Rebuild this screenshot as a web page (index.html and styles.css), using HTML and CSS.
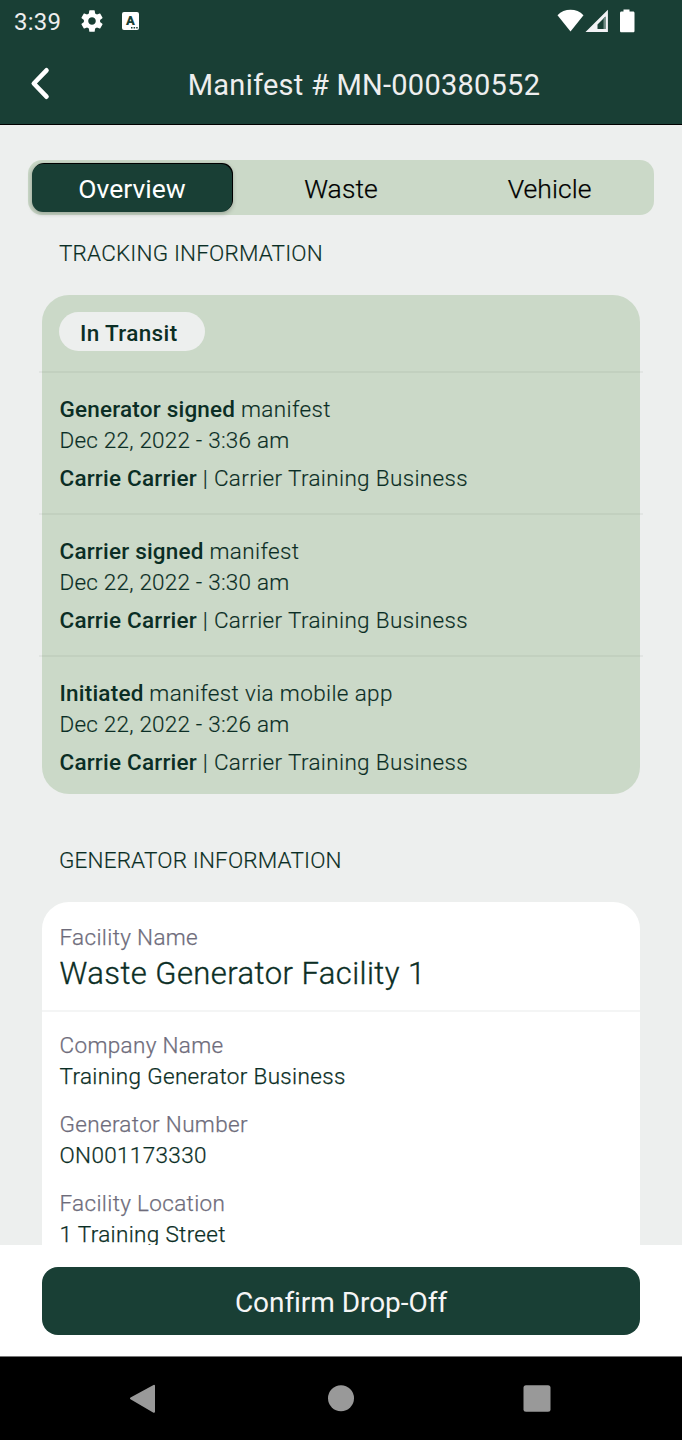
FILE: index.html
```html
<!DOCTYPE html>
<html lang="en">
<head>
<meta charset="utf-8">
<title>Manifest</title>
<link rel="stylesheet" href="styles.css">
</head>
<body>
<div class="screen">
  <div class="status">
    <span class="clock">3:39</span>
    <svg class="ic-gear" width="26" height="26" viewBox="0 0 24 24"><path fill="#fff" d="M19.43 12.98c.04-.32.07-.64.07-.98s-.03-.66-.07-.98l2.11-1.65c.19-.15.24-.42.12-.64l-2-3.46c-.12-.22-.39-.3-.61-.22l-2.49 1c-.52-.4-1.08-.73-1.69-.98l-.38-2.65C14.46 2.18 14.25 2 14 2h-4c-.25 0-.46.18-.49.42l-.38 2.65c-.61.25-1.17.59-1.69.98l-2.49-1c-.23-.09-.49 0-.61.22l-2 3.46c-.13.22-.07.49.12.64l2.11 1.65c-.04.32-.07.65-.07.98s.03.66.07.98l-2.11 1.65c-.19.15-.24.42-.12.64l2 3.46c.12.22.39.3.61.22l2.49-1c.52.4 1.08.73 1.69.98l.38 2.65c.03.24.24.42.49.42h4c.25 0 .46-.18.49-.42l.38-2.65c.61-.25 1.17-.59 1.69-.98l2.49 1c.23.09.49 0 .61-.22l2-3.46c.12-.22.07-.49-.12-.64l-2.110-1.650zM12 15.500c-1.930 0-3.500-1.570-3.500-3.500s1.570-3.500 3.500-3.500 3.500 1.570 3.500 3.500-1.570 3.500-3.500 3.500z"/></svg>
    <span class="ic-a">A<svg width="7" height="2" viewBox="0 0 7 2"><path fill="#193f35" d="M0 0h1.500v1.500H0zM2.600 0h1.500v1.500H2.600zM5.200 0h1.500v1.500H5.200z"/></svg></span>
    <svg class="ic-right" width="82" height="26" viewBox="0 0 82 26">
      <path fill="#fff" d="M.5 7.300C4 3.600 8.500 1.800 13.500 1.800s9.500 1.800 13 5.500L13.500 23.500z"/>
      <path fill="#f2f2f5" fill-rule="evenodd" d="M28.500 24 50.900 1.800V24zM40.500 21h8V8.500l-8 8z"/>
      <path fill="#6f8a83" d="M46.500 10.500 48.500 8.500V21h-2z"/>
      <path fill="#fff" d="M66.500 1.500h6v2h3.500c1 0 1.500.6 1.500 1.500v17.800c0 1-.5 1.500-1.500 1.500H64.500c-1 0-1.500-.5-1.500-1.500V5c0-.9.500-1.500 1.500-1.500h2z"/>
    </svg>
  </div>
  <header class="header">
    <svg class="back" width="24" height="36" viewBox="0 0 24 36"><path fill="none" stroke="#fff" stroke-width="4.600" stroke-linecap="round" stroke-linejoin="round" d="M17.500 4.300 4.800 17.500 17.500 30.700"/></svg>
    <h1 class="title">Manifest # MN-000380552</h1>
  </header>
  <main class="content">
    <nav class="tabs">
      <div class="tab active"><span>Overview</span></div>
      <div class="tab"><span>Waste</span></div>
      <div class="tab"><span>Vehicle</span></div>
    </nav>
    <h2 class="heading"><span>TRACKING INFORMATION</span></h2>
    <section class="card tracking">
      <div class="pill-row"><span class="pill">In Transit</span></div>
      <div class="event">
        <p><b>Generator signed</b> manifest</p>
        <p class="date">Dec 22, 2022 - 3:36 am</p>
        <p class="who"><b>Carrie Carrier</b> | Carrier Training Business</p>
      </div>
      <div class="event">
        <p><b>Carrier signed</b> manifest</p>
        <p class="date">Dec 22, 2022 - 3:30 am</p>
        <p class="who"><b>Carrie Carrier</b> | Carrier Training Business</p>
      </div>
      <div class="event">
        <p><b>Initiated</b> manifest via mobile app</p>
        <p class="date">Dec 22, 2022 - 3:26 am</p>
        <p class="who"><b>Carrie Carrier</b> | Carrier Training Business</p>
      </div>
    </section>
    <h2 class="heading second"><span>GENERATOR INFORMATION</span></h2>
    <section class="card generator">
      <div class="facility">
        <p class="label">Facility Name</p>
        <p class="big">Waste Generator Facility 1</p>
      </div>
      <div class="fields">
        <div class="field"><p class="label">Company Name</p><p>Training Generator Business</p></div>
        <div class="field"><p class="label">Generator Number</p><p>ON001173330</p></div>
        <div class="field"><p class="label">Facility Location</p><p>1 Training Street</p></div>
      </div>
    </section>
  </main>
  <footer class="footer"><button class="confirm">Confirm Drop-Off</button></footer>
  <div class="navbar">
    <svg width="682" height="83" viewBox="0 0 682 83"><g fill="#999"><path stroke="#999" stroke-width="2" stroke-linejoin="round" d="M131 41.500 154 28.800v26z"/><circle cx="341" cy="41.300" r="13"/><rect x="523.500" y="28.300" width="27" height="26.500" rx="2.500"/></g></svg>
  </div>
</div>
</body>
</html>
```
FILE: styles.css
```css
* { box-sizing: border-box; }
body, h1, h2, p { margin: 0; font-weight: inherit; }
body { font-family: Roboto, sans-serif; background: #edefee; }
.screen { width: 682px; height: 1440px; display: flex; flex-direction: column; overflow: hidden; white-space: nowrap; }
.status { height: 44px; flex: none; background: #193f35; color: #eee; display: flex; align-items: flex-start; padding-left: 14px; }
.clock { font-size: 24px; line-height: 44px; width: 65px; letter-spacing: .2px; }
.ic-gear { margin-top: 8px; flex: none; }
.ic-a { margin: 12px 0 0 17px; width: 17px; height: 18px; border-radius: 2px; background: #fff; color: #193f35; font-size: 13px; font-weight: 900; line-height: 17px; text-align: center; position: relative; }
.ic-a svg { position: absolute; right: 1px; bottom: 1px; }
.ic-right { margin: 8px 43px 0 auto; flex: none; }
.header { height: 81px; flex: none; background: #193f35; border-bottom: 1px solid #000; color: #eee; display: flex; }
.back { margin: 22px 0 0 29px; flex: none; }
.title { flex: 1; margin-right: 7px; text-align: center; font-size: 29px; line-height: 82px; letter-spacing: .25px; }
.content { flex: 1; min-height: 0; overflow: hidden; padding: 35px 28px 0; background: #edefee; color: #0b2e25; }
.tabs { height: 55px; border-radius: 14px; background: #cbd9c8; display: grid; grid-template: 55px / repeat(3, 1fr); color: #000; font-size: 26.5px; font-weight: 300; letter-spacing: .1px; -webkit-text-stroke: .25px currentColor; text-align: center; }
.tab { line-height: 58px; }
.tab.active { margin: 4px 4.5px 3px 4px; height: 48px; line-height: 50px; border-radius: 11px; background: #193f35; color: #fff; font-weight: 400; letter-spacing: 0; -webkit-text-stroke: 0; box-shadow: 1px -1px 0 0 #000, 0 1px 4px 1px rgba(0,0,0,.22); }
.heading { margin: 23px 0 0 31px; font-size: 22.5px; line-height: 31px; font-weight: 300; letter-spacing: .17px; -webkit-text-stroke: .15px currentColor; }
.card { margin: 26px 14px 0; border-radius: 27px; font-size: 22.5px; line-height: 31px; font-weight: 300; letter-spacing: .36px; -webkit-text-stroke: .15px currentColor; }
.tracking { height: 499px; background: #cbd9c8; }
.pill-row { height: 76px; padding: 17px 0 0 17px; }
.pill { display: block; width: 146px; height: 39px; border-radius: 20px; background: #edefee; font-weight: 500; line-height: 42px; padding-left: 21px; }
.event { height: 142px; margin: 0 -3px; padding: 21px 0 0 20.5px; border-top: 2px solid rgba(0,20,0,.045); }
.event b { font-weight: 500; letter-spacing: .2px; }
.event b, .pill { -webkit-text-stroke: 0; }
.date { letter-spacing: .21px; }
.who { margin-top: 7px; }
.heading.second { margin-top: 51px; }
.generator { background: #fff; height: 400px; padding-top: 20px; letter-spacing: .34px; -webkit-text-stroke: .25px currentColor; }
.facility { height: 90px; border-bottom: 2px solid #f4f5f5; padding-left: 17.5px; }
.label { color: #6e6c7b; }
.big { font-size: 31px; line-height: 42px; letter-spacing: .43px; -webkit-text-stroke: .35px currentColor; }
.fields { padding: 18px 0 0 17.5px; display: grid; gap: 17px; }
.footer { height: 112px; flex: none; background: #fff; border-bottom: 1px solid #777; padding: 22px 42px 0; }
.confirm { display: block; width: 598px; height: 68px; border: 0; border-radius: 16px; background: #193f35; color: #f5f5f5; font: 400 28px/70px Roboto, sans-serif; letter-spacing: -.05px; padding: 1px 0 0; }
.navbar { height: 83px; flex: none; background: #000; }
.navbar svg { display: block; }
```
